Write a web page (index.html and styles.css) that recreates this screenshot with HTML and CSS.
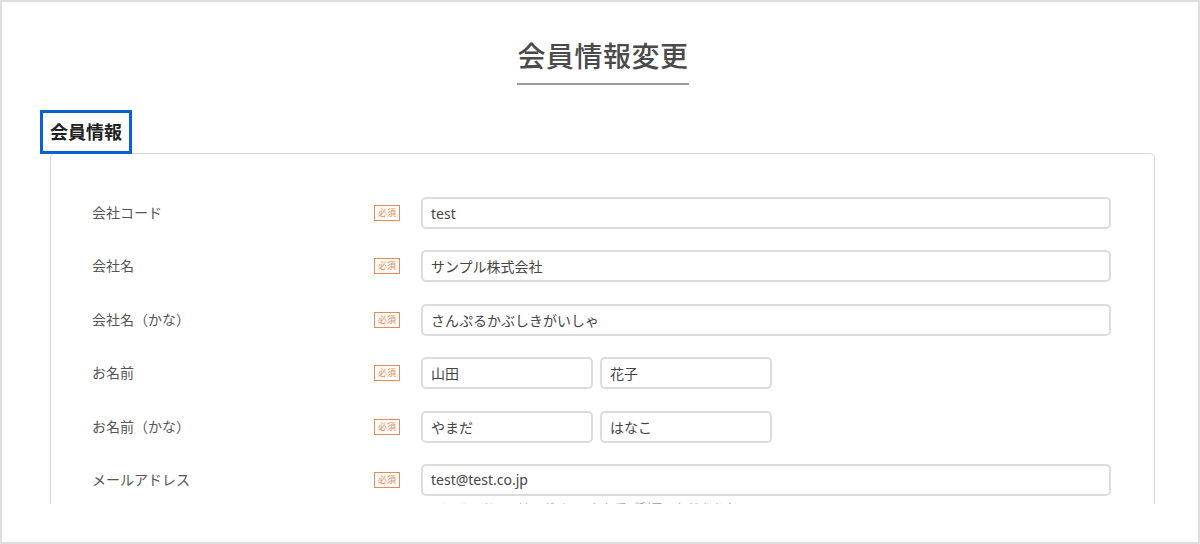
FILE: index.html
```
<!DOCTYPE html>
<html lang="ja">
<head>
    <meta charset="UTF-8">
    <title>会員情報変更</title>
    <link rel="stylesheet" href="styles.css">
</head>
<body>

<div class="frame">
    <div class="viewport">
        <div class="page-title">
            <h1>会員情報変更</h1>
        </div>

        <!-- Member info section -->
        <h2 class="section-title">会員情報</h2>
        <div class="panel">
            <div class="row">
                <div class="label">会社コード</div>
                <span class="required">必須</span>
                <div class="field"><input class="text-input" type="text" value="test"></div>
            </div>
            <div class="row">
                <div class="label">会社名</div>
                <span class="required">必須</span>
                <div class="field"><input class="text-input" type="text" value="サンプル株式会社"></div>
            </div>
            <div class="row">
                <div class="label">会社名（かな）</div>
                <span class="required">必須</span>
                <div class="field"><input class="text-input" type="text" value="さんぷるかぶしきがいしゃ"></div>
            </div>
            <div class="row">
                <div class="label">お名前</div>
                <span class="required">必須</span>
                <div class="field split">
                    <input class="text-input half" type="text" value="山田">
                    <input class="text-input half" type="text" value="花子">
                </div>
            </div>
            <div class="row">
                <div class="label">お名前（かな）</div>
                <span class="required">必須</span>
                <div class="field split">
                    <input class="text-input half" type="text" value="やまだ">
                    <input class="text-input half" type="text" value="はなこ">
                </div>
            </div>
            <div class="row">
                <div class="label">メールアドレス</div>
                <span class="required">必須</span>
                <div class="field">
                    <input class="text-input" type="email" value="test@test.co.jp">
                    <p class="hint">※ メールアドレスはログインIDとしてご利用いただきます</p>
                </div>
            </div>
        </div>
    </div>
</div>

</body>
</html>
```

FILE: styles.css
```
body {
    margin: 0;
    padding: 0;
    background-color: #fff;
    font-family: "Noto Sans", "Noto Sans CJK JP", sans-serif;
    color: #444;
}
.frame {
    width: 1200px;
    height: 544px;
    border: 2px solid #ddd;
    box-sizing: border-box;
    background-color: #fff;
}
.viewport {
    height: 502px;
    overflow: hidden;
}
.page-title {
    text-align: center;
    padding-top: 34px;
    padding-left: 6px;
}
h1 {
    display: inline-block;
    margin: 0;
    font-size: 28px;
    line-height: 40px;
    font-weight: 500;
    color: #4a4a4a;
    letter-spacing: 0.5px;
    padding-bottom: 7px;
    border-bottom: 2px solid #999;
}
.section-title {
    display: inline-block;
    margin: 25px 0 0 38px;
    padding: 0 7px;
    border: 3px solid #0a62d0;
    font-size: 18px;
    line-height: 38px;
    font-weight: 700;
    color: #222;
}
.panel {
    margin: -1px 43px 0 48px;
    border: 1px solid #d6d6d6;
    border-radius: 5px;
    padding: 43px 43px 40px 41px;
}
.row {
    display: flex;
    align-items: flex-start;
    margin-bottom: 21.4px;
}
.label {
    width: 282px;
    font-size: 14px;
    line-height: 32px;
    color: #555;
}
.required {
    margin-top: 8px;
    width: 26px;
    height: 16px;
    box-sizing: border-box;
    border: 1px solid #e98a55;
    color: #e98a55;
    font-size: 9px;
    line-height: 14px;
    text-align: center;
    margin-right: 21px;
}
.field {
    flex: 1;
}
.field.split {
    display: flex;
    gap: 7px;
}
.text-input {
    display: block;
    width: 100%;
    height: 32px;
    box-sizing: border-box;
    border: 2px solid #dcdcdc;
    border-radius: 5px;
    padding: 0 8px;
    font-family: "Noto Sans", "Noto Sans CJK JP", sans-serif;
    font-size: 14px;
    color: #444;
    background-color: #fff;
}
.text-input.half {
    width: 172px;
}
.hint {
    margin: 3px 0 0 0;
    font-size: 12px;
    color: #aaa;
}
```
